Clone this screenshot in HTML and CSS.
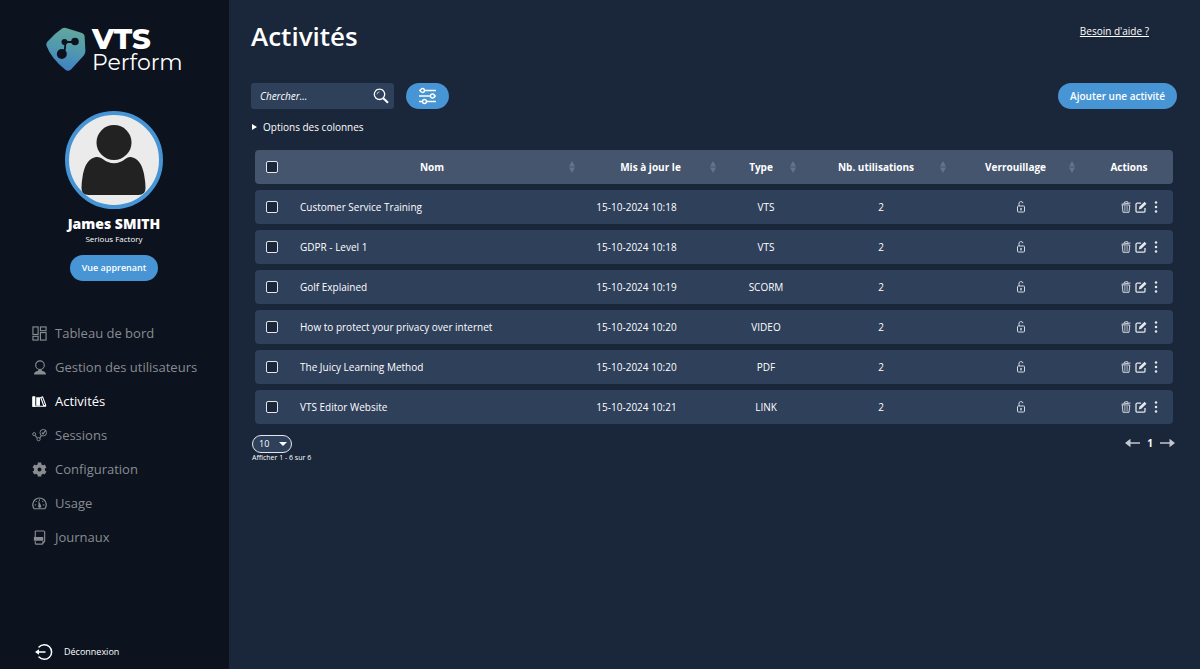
FILE: index.html
```html
<!DOCTYPE html>
<html lang="fr">
<head>
<meta charset="utf-8">
<meta name="viewport" content="width=device-width, initial-scale=1">
<title>VTS Perform - Activités</title>
<link rel="stylesheet" href="styles.css">
</head>
<body>
<svg class="defs" aria-hidden="true">
  <symbol id="lock" viewBox="0 0 10 12"><g fill="none" stroke="currentColor" stroke-width="1"><rect x="1.500" y="5" width="7" height="6" rx=".8"/><path d="M3 5V3a2 2 0 0 1 4-.8"/></g><rect x="4.300" y="7" width="1.400" height="2.400" fill="currentColor"/></symbol>
  <symbol id="trash" viewBox="0 0 12 12"><g fill="none" stroke="currentColor"><path d="M1.500 3.200 10.500 2M4 2.500 4.500 1l3-.4.6 1.400" stroke-width=".9"/><path d="M2.200 4h7.600L9 11.300H3z" stroke-width=".9"/><path d="M4.600 5v5.500M6 5v5.500M7.400 5v5.500" stroke-width=".5"/></g></symbol>
  <symbol id="edit" viewBox="0 0 12 12"><path d="M6 2.200H2.400Q1 2.200 1 3.600V10q0 1.200 1.400 1.200h6.200Q10 11.200 10 10V7" fill="none" stroke="currentColor" stroke-width="1.300"/><path d="M3.800 8.400 4.400 5.800 9.600.8l1.900 1.900-5.200 5.100z" fill="currentColor"/></symbol>
  <symbol id="dots" viewBox="0 0 4 12"><g fill="currentColor"><circle cx="2" cy="1.600" r="1.250"/><circle cx="2" cy="6" r="1.250"/><circle cx="2" cy="10.400" r="1.250"/></g></symbol>
  <symbol id="sort" viewBox="0 0 8 12"><path d="M4 0 7 5.400H1zM1 6.600h6L4 12z" fill="currentColor"/></symbol>
  <symbol id="arrow" viewBox="0 0 15 10"><path d="M5 5h10" stroke="currentColor" stroke-width="1.500"/><path d="M0 5 5.500.8v8.400z" fill="currentColor"/></symbol>
</svg>
<div class="app">
  <aside class="sidebar">
    <div class="logo">
      <svg class="logo-mark" viewBox="0 0 40 44" aria-hidden="true">
        <defs><linearGradient id="brand" x1=".6" y1="0" x2=".4" y2="1"><stop offset="0" stop-color="#62a79d"/><stop offset=".5" stop-color="#5099ae"/><stop offset="1" stop-color="#3e7fc4"/></linearGradient></defs>
        <path d="M16 1.600q2-1.200 4-.6L36 6q2.400.8 2.600 3l.8 15q0 2.500-1.600 4.400L25 42.500q-3 2.500-6 0Q5 31 .6 19q-.8-2.600 1-4.400Q8 7 16 1.600z" fill="url(#brand)"/>
        <path d="M16 27Q20 24 19 16M20 15h10" stroke="#0c131f" stroke-width="1.800" fill="none"/>
        <g fill="#0c131f"><circle cx="15.800" cy="27" r="5"/><circle cx="18.500" cy="15" r="3"/><circle cx="29" cy="14.500" r="3.800"/></g>
      </svg>
      <div class="logo-text"><strong>VTS</strong><span>Perform</span></div>
    </div>
    <div class="profile">
      <svg class="avatar" viewBox="0 0 98 98" aria-hidden="true">
        <circle cx="49" cy="49" r="47" fill="#ebebeb" stroke="#4594d5" stroke-width="4"/>
        <circle cx="49" cy="31.500" r="17.500" fill="#222"/>
        <path d="M31 46q-10 2-13 17-1.500 8-1.500 14 0 7 7 7h50q7 0 7-7 0-6-1.500-14Q76 48 66 46q-3-.5-5 1.500Q49 57 37 47.500 34.500 45.500 31 46z" fill="#222"/>
      </svg>
      <strong class="name">James SMITH</strong>
      <span class="company">Serious Factory</span>
      <button class="pill view" type="button">Vue apprenant</button>
    </div>
    <nav class="menu">
      <a href="#"><svg viewBox="0 0 16 16"><g fill="none" stroke="currentColor" stroke-width="1.200"><rect x="1" y="1" width="5.500" height="8"/><rect x="9" y="1" width="6" height="4"/><rect x="1" y="11" width="5.500" height="4"/><rect x="9" y="7" width="6" height="8"/></g></svg>Tableau de bord</a>
      <a href="#"><svg viewBox="0 0 16 16"><circle cx="8.500" cy="5.500" r="4.600" fill="none" stroke="currentColor" stroke-width="1.200"/><path d="M2 15.500q.5-3.500 4.500-4.100V10h4v1.400q4 .6 4.500 4.100z" fill="currentColor"/></svg>Gestion des utilisateurs</a>
      <a href="#" class="active" aria-current="page"><svg viewBox="0 0 16 16"><path d="M.5 2.500h3v11h-3zM4.500 3.500h4v9h-4z" fill="currentColor"/><path d="M1 3v10h14M9.300 3.800l2-.7 3.300 8.800-2 .7z" fill="none" stroke="currentColor" stroke-width="1.200"/></svg>Activités</a>
      <a href="#"><svg viewBox="0 0 16 16"><g fill="none" stroke="currentColor"><circle cx="2.300" cy="6.500" r="1.600"/><circle cx="7" cy="12" r="1.700"/><circle cx="12" cy="5" r="3.500"/><path d="m3.300 8 2.300 2.600M8.200 10.800 10 8M10.500 5l1.300 1.300 3-4" stroke-width="1.200"/></g></svg>Sessions</a>
      <a href="#"><svg viewBox="0 0 16 16"><circle cx="8" cy="8" r="4" fill="none" stroke="currentColor" stroke-width="3.800"/><path d="M8 .5v3M8 12.500v3M1.500 4.300l2.500 1.400M12 10.300l2.500 1.400M1.500 11.700l2.500-1.400M12 5.700l2.500-1.400" stroke="currentColor" stroke-width="3.800"/></svg>Configuration</a>
      <a href="#"><svg viewBox="0 0 16 16"><path d="M2.200 13.600A7.200 7.200 0 1 1 13.800 13.600z" fill="none" stroke="currentColor" stroke-width="1.300" stroke-linejoin="round"/><path d="M8 3.500v2M4 5.200l1.200 1.200M12 5.200l-1.200 1.200M2.800 9.500h1.700M11.500 9.500h1.700" stroke="currentColor"/><path d="M7 4.800 9.600 10a1.700 1.700 0 1 1-2.800 0z" fill="currentColor"/></svg>Usage</a>
      <a href="#"><svg viewBox="0 0 16 16"><path d="M3.500 8V2Q3.500 1 4.500 1h8q1 0 1 1v10l-2.500 3H4.500q-1 0-1-1v-2" fill="none" stroke="currentColor" stroke-width="1.200"/><path d="M2 7.500h10v4H2zM11 15v-3h2.500z" fill="currentColor"/></svg>Journaux</a>
    </nav>
    <a class="logout" href="#"><svg viewBox="0 0 18 18" aria-hidden="true"><path d="M4 4a7.300 7.300 0 1 1 0 10M4 9h6" fill="none" stroke="currentColor" stroke-width="1.500" stroke-linecap="round"/><path d="M0 9l4-2.700v5.400z" fill="currentColor"/></svg>Déconnexion</a>
  </aside>

  <main class="content">
    <header class="top"><h1>Activités</h1><a class="help" href="#">Besoin d'aide ?</a></header>
    <div class="tools">
      <label class="search">
        <input type="text" placeholder="Chercher..." aria-label="Chercher">
        <svg viewBox="0 0 16 16" aria-hidden="true"><circle cx="6.500" cy="6.300" r="5.200" fill="none" stroke="currentColor" stroke-width="1.300"/><path d="M4 6.300Q4.200 4 6.500 3.800" fill="none" stroke="currentColor" stroke-width=".7"/><path d="m10.300 10.200 4.700 4.600" stroke="currentColor" stroke-width="2"/></svg>
      </label>
      <button class="pill filter" type="button" aria-label="Filtres"><svg viewBox="0 0 18 18"><g fill="none" stroke="currentColor" stroke-width="1.300"><path d="M0 3.500h1.500M5.500 3.500H17M0 9h11.500M15.500 9H17M0 14.500h3.500M7.500 14.500H17"/><circle cx="3.500" cy="3.500" r="2"/><circle cx="13.500" cy="9" r="2"/><circle cx="5.500" cy="14.500" r="2"/></g></svg></button>
      <button class="pill add" type="button">Ajouter une activité</button>
    </div>
    <button class="options" type="button"><svg viewBox="0 0 5 6" aria-hidden="true"><path d="M0 0 5 3 0 6z" fill="currentColor"/></svg>Options des colonnes</button>

    <table class="grid">
      <colgroup><col class="c-check"><col><col class="c-date"><col class="c-type"><col class="c-uses"><col class="c-lock"><col class="c-actions"></colgroup>
      <thead><tr>
        <th class="check"><input type="checkbox" aria-label="Tout sélectionner"></th>
        <th>Nom<svg class="sort"><use href="#sort"/></svg></th>
        <th>Mis à jour le<svg class="sort"><use href="#sort"/></svg></th>
        <th>Type<svg class="sort"><use href="#sort"/></svg></th>
        <th>Nb. utilisations<svg class="sort"><use href="#sort"/></svg></th>
        <th>Verrouillage<svg class="sort"><use href="#sort"/></svg></th>
        <th class="th-actions">Actions</th>
      </tr></thead>
      <tbody id="rows"></tbody>
    </table>

    <footer class="bottom">
      <div class="sizes">
        <span class="select"><select aria-label="Lignes par page"><option>10</option><option>25</option><option>50</option></select></span>
        <span class="range">Afficher 1 - 6 sur 6</span>
      </div>
      <div class="pager">
        <button type="button" aria-label="Page précédente"><svg><use href="#arrow"/></svg></button>
        <strong>1</strong>
        <button type="button" aria-label="Page suivante"><svg class="flip"><use href="#arrow"/></svg></button>
      </div>
    </footer>
  </main>
</div>
<script src="app.js"></script>
</body>
</html>
```
FILE: styles.css
```css
* { box-sizing: border-box; }
body { margin: 0; background: #1a2639; color: #fff; font: 500 10px/16px "Open Sans", "Noto Sans", sans-serif; }
button, input, select { font: inherit; color: inherit; margin: 0; }
button { border: 0; padding: 0; background: none; cursor: pointer; }
a { color: inherit; text-decoration: none; }
svg { display: block; flex: none; }
.defs { position: absolute; width: 0; height: 0; }
.app { display: flex; min-height: 100vh; }

.sidebar { flex: 0 0 229px; display: flex; flex-direction: column; background: #0c121e; padding: 27px 0 8px; }
.logo { display: flex; gap: 6px; padding-left: 46px; height: 48px; }
.logo-mark { width: 40px; height: 44px; }
.logo-text { display: flex; flex-direction: column; font-family: Montserrat, Inter, sans-serif; }
.logo-text strong { font-size: 29px; line-height: 24px; font-weight: 800; }
.logo-text span { font-size: 22px; line-height: 24px; font-weight: 400; }
.profile { display: flex; flex-direction: column; align-items: center; margin-top: 36px; padding-right: 1px; }
.avatar { width: 98px; height: 98px; }
.name { font-size: 14px; line-height: 20px; font-weight: 800; margin-top: 5px; }
.company { font-size: 8px; line-height: 10px; }
.pill { background: #4795d4; border-radius: 13px; height: 26px; font-weight: 600; }
.view { width: 88px; font-size: 9px; margin-top: 11px; }
.menu { display: flex; flex-direction: column; padding-left: 32px; margin-top: 35px; color: #898c91; font-size: 13px; font-weight: 400; }
.menu a { display: flex; align-items: center; gap: 8px; height: 34px; }
.menu svg { width: 15px; height: 15px; }
.menu .active { color: #fff; font-weight: 500; }
.logout { display: flex; align-items: center; gap: 11px; margin-top: auto; padding-left: 35px; font-size: 9px; line-height: 18px; }
.logout svg { width: 18px; height: 18px; }

.content { flex: 1; min-width: 0; padding: 18px 23px 20px 22px; }
.top { display: flex; justify-content: space-between; padding-right: 28px; }
h1 { margin: 0; font-size: 26px; line-height: 36px; font-weight: 600; }
.help { line-height: 26px; text-decoration: underline; }
.tools { display: flex; align-items: center; margin-top: 29px; }
.search { display: flex; align-items: center; width: 143px; height: 26px; padding: 0 5px 0 9px; background: #2f405b; border-radius: 3px; }
.search input { flex: 1; min-width: 0; border: 0; padding: 0; background: none; outline: none; font-style: italic; }
.search input::placeholder { color: #fff; opacity: 1; }
.search svg { width: 16px; height: 16px; }
.filter { display: grid; place-items: center; width: 43px; margin-left: 12px; }
.filter svg { width: 18px; height: 18px; }
.add { margin-left: auto; padding: 0 12px; }
.options { display: flex; align-items: center; gap: 6px; margin-top: 9px; padding-left: 1px; line-height: 18px; }
.options svg { width: 5px; height: 6px; }

.grid { width: calc(100% - 8px); margin: 8px 4px 0; table-layout: fixed; border-collapse: separate; border-spacing: 0 6px; }
.c-check { width: 29px; }
.c-date { width: 141px; }
.c-type { width: 80px; }
.c-uses { width: 150px; }
.c-lock { width: 129px; }
.c-actions { width: 93px; }
.grid th, .grid td { height: 34px; padding: 0; text-align: center; background: #2f405b; }
.grid th { position: relative; background: #45556e; font-weight: 700; }
.grid tr > :first-child { border-radius: 4px 0 0 4px; }
.grid tr > :last-child { border-radius: 0 4px 4px 0; }
.grid .check { padding-left: 11px; text-align: left; }
.grid .title { padding-left: 16px; text-align: left; }
.grid .date { padding-right: 28px; }
.grid .shift { padding-left: 10px; }
.grid .th-actions { padding-left: 5px; }
.sort { position: absolute; right: 4px; top: 11px; width: 8px; height: 12px; color: #66738a; }
.check input { appearance: none; display: block; width: 12px; height: 12px; border: 1px solid #e4e7ec; border-radius: 2px; background: #1b2638; }
.lock { width: 10px; height: 12px; margin: 0 auto; color: #d5dae2; }
.actions { display: flex; justify-content: center; align-items: center; gap: 3px; padding-left: 29px; color: #e4e7ec; }
.actions svg { width: 12px; height: 12px; }
.actions button:last-child svg { width: 4px; }
.actions button:last-child { padding: 0 4px; }

.bottom { display: flex; justify-content: space-between; align-items: flex-start; padding: 5px 2px 0 1px; }
.sizes { display: flex; flex-direction: column; }
.select { position: relative; width: 40px; height: 18px; }
.select select { appearance: none; display: block; width: 100%; height: 100%; border: 1px solid #e4e7ec; border-radius: 9px; background: #2f405b; padding: 0 6px; font-size: 9px; line-height: 16px; }
.select::after { content: ""; position: absolute; right: 5px; top: 7px; border: 4px solid transparent; border-top: 4px solid #fff; border-bottom: 0; pointer-events: none; }
.range { font-size: 7px; line-height: 10px; }
.pager { display: flex; align-items: center; gap: 7px; color: #c3c7ce; }
.pager strong { color: #fff; }
.pager svg { width: 15px; height: 10px; }
.pager .flip { transform: scaleX(-1); }
```
FILE: app.js
```js
const activities = [
  ["Customer Service Training", "15-10-2024 10:18", "VTS", 2],
  ["GDPR - Level 1", "15-10-2024 10:18", "VTS", 2],
  ["Golf Explained", "15-10-2024 10:19", "SCORM", 2],
  ["How to protect your privacy over internet", "15-10-2024 10:20", "VIDEO", 2],
  ["The Juicy Learning Method", "15-10-2024 10:20", "PDF", 2],
  ["VTS Editor Website", "15-10-2024 10:21", "LINK", 2]
];
const action = (icon, label) =>
  `<button type="button" aria-label="${label}"><svg><use href="#${icon}"/></svg></button>`;

document.getElementById("rows").innerHTML = activities.map(([name, date, type, uses]) => `
  <tr>
    <td class="check"><input type="checkbox" aria-label="${name}"></td>
    <td class="title">${name}</td>
    <td class="date">${date}</td>
    <td class="shift">${type}</td>
    <td class="shift">${uses}</td>
    <td class="shift"><svg class="lock"><use href="#lock"/></svg></td>
    <td><div class="actions">${action("trash", "Supprimer")}${action("edit", "Modifier")}${action("dots", "Plus")}</div></td>
  </tr>`).join("");
```
